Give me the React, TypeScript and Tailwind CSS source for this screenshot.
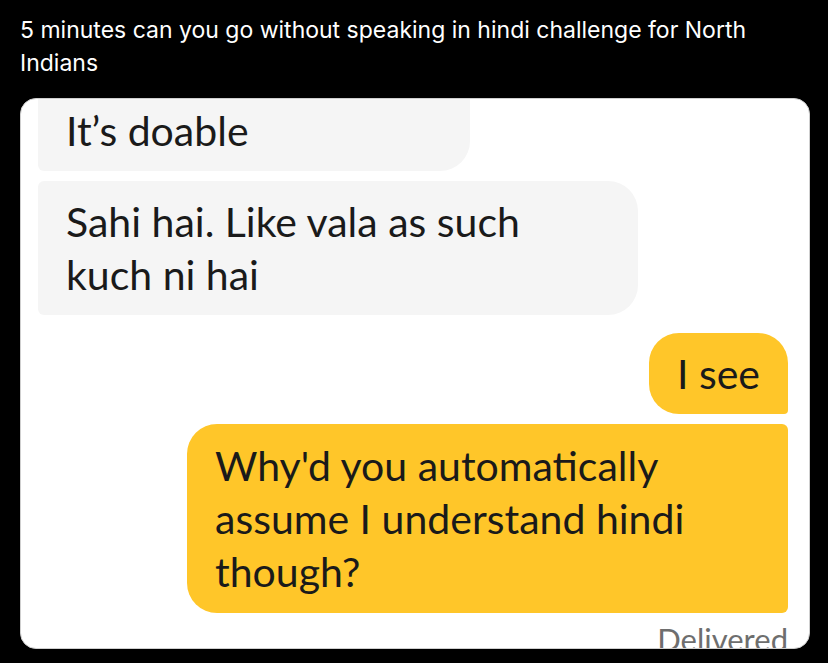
export default function App() {
  return (
    <div className="w-[828px] h-[663px] bg-black overflow-hidden">
      {/* Tweet text */}
      <div className="w-[790px] px-[20px] pt-[14px] text-white text-[23px] leading-[33px] font-['Inter',sans-serif]">
        5 minutes can you go without speaking in hindi challenge for North Indians
      </div>

      {/* Screenshot card */}
      <div className="ml-[20px] mr-[18px] mt-[18px] h-[551px] rounded-[16px] border border-[#cfcfcf] bg-white overflow-hidden pl-[17px] pr-[21px] font-['Lato',sans-serif] text-[#1a1a1a]">
        <div className="-mt-[9px] flex flex-col">
          <div className="w-[432px] bg-[#f5f5f5] rounded-[6px] rounded-br-[30px] px-[28px] py-[14px] text-[41px] leading-[53px]">
            It’s doable
          </div>
          <div className="mt-[10px] w-[600px] bg-[#f5f5f5] rounded-[6px] rounded-tr-[30px] rounded-br-[30px] px-[28px] py-[14px] text-[41px] leading-[53px]">
            Sahi hai. Like vala as such
            <br />
            kuch ni hai
          </div>
          <div className="mt-[18px] self-end bg-[#ffc629] rounded-[30px] rounded-br-[4px] px-[28px] py-[14px] text-[41px] leading-[53px]">
            I see
          </div>
          <div className="mt-[10px] self-end w-[601px] bg-[#ffc629] rounded-[30px] rounded-tr-[6px] rounded-br-[6px] px-[28px] py-[15px] text-[41px] leading-[53px]">
            Why'd you automatically
            <br />
            assume I understand hindi
            <br />
            though?
          </div>
          <div className="mt-[8px] self-end text-[31px] leading-[36px] text-[#6e6e6e]">
            Delivered
          </div>
        </div>
      </div>
    </div>
  );
}
